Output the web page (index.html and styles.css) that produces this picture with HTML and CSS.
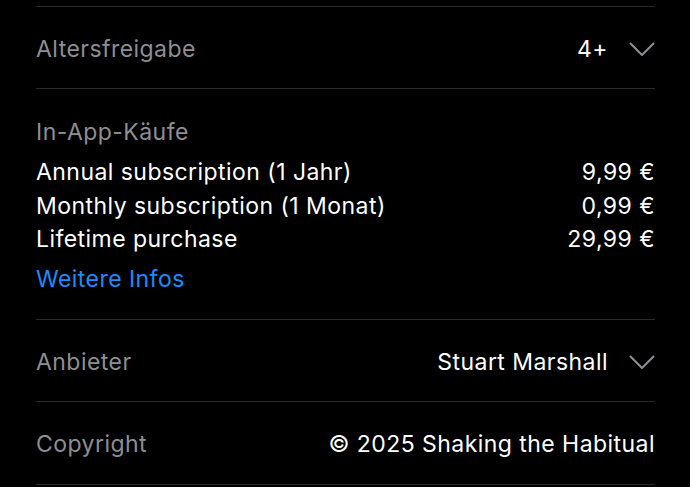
FILE: index.html
```html
<!DOCTYPE html>
<html lang="de">
<head>
    <meta charset="UTF-8">
    <meta name="viewport" content="width=device-width, initial-scale=1.0">
    <title>Informationen</title>
<link rel="stylesheet" href="styles.css">
</head>
<body>
    <section class="info-list">
        <div class="info-row">
            <span class="label">Altersfreigabe</span>
            <span class="value">4+
                <svg class="chevron" viewBox="0 0 26 14"><path d="M1 1 L13 13 L25 1" /></svg>
            </span>
        </div>
        <div class="info-block">
            <p class="label">In-App-Käufe</p>
            <ul class="purchases">
                <li><span>Annual subscription (1 Jahr)</span><span>9,99 €</span></li>
                <li><span>Monthly subscription (1 Monat)</span><span>0,99 €</span></li>
                <li><span>Lifetime purchase</span><span>29,99 €</span></li>
            </ul>
            <a class="more" href="#">Weitere Infos</a>
        </div>
        <div class="info-row">
            <span class="label">Anbieter</span>
            <span class="value">Stuart Marshall
                <svg class="chevron" viewBox="0 0 26 14"><path d="M1 1 L13 13 L25 1" /></svg>
            </span>
        </div>
        <div class="info-row last">
            <span class="label">Copyright</span>
            <span class="value">© 2025 Shaking the Habitual</span>
        </div>
    </section>
</body>
</html>
```

FILE: styles.css
```css
body {
    margin: 0;
    background-color: #000;
    color: #fff;
    font-family: Inter, "Noto Sans", sans-serif;
    font-size: 23px;
    letter-spacing: 0.45px;
}
.info-list {
    margin: 6px 35px 0 36px;
    border-top: 1px solid #2a2a2c;
}
.info-row {
    box-sizing: border-box;
    display: flex;
    align-items: center;
    justify-content: space-between;
    height: 82px;
    padding-top: 3px;
    border-bottom: 1px solid #2a2a2c;
}
.info-row.last {
    height: 83px;
}
.label {
    color: #8e8e93;
}
.value {
    display: flex;
    align-items: center;
    gap: 21px;
}
.chevron {
    width: 26px;
    height: 14px;
    fill: none;
    stroke: #8e8e93;
    stroke-width: 2;
}
.info-block {
    padding: 26px 0 23px;
    border-bottom: 1px solid #2a2a2c;
    line-height: 34px;
}
.info-block > p {
    margin: 0;
}
.purchases {
    list-style: none;
    margin: 6px 0 0;
    padding: 0;
}
.purchases li {
    display: flex;
    justify-content: space-between;
    height: 33.5px;
}
.more {
    display: block;
    margin-top: 6px;
    color: #1a8cff;
    text-decoration: none;
}
```
